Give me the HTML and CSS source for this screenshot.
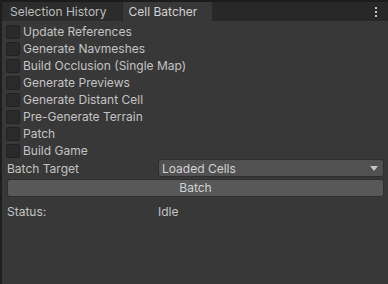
FILE: index.html
```html
<!DOCTYPE html>
<html lang="en">
<head>
    <meta charset="UTF-8">
    <title>Cell Batcher</title>
    <link rel="stylesheet" href="styles.css">
</head>
<body>
    <div class="window">
        <div class="tab-bar">
            <div class="tab">Selection History</div>
            <div class="tab active">Cell Batcher</div>
            <div class="menu-dots"><span></span><span></span><span></span></div>
        </div>

        <div class="panel">
            <label class="toggle"><span class="box"></span>Update References</label>
            <label class="toggle"><span class="box"></span>Generate Navmeshes</label>
            <label class="toggle"><span class="box"></span>Build Occlusion (Single Map)</label>
            <label class="toggle"><span class="box"></span>Generate Previews</label>
            <label class="toggle"><span class="box"></span>Generate Distant Cell</label>
            <label class="toggle"><span class="box"></span>Pre-Generate Terrain</label>
            <label class="toggle"><span class="box"></span>Patch</label>
            <label class="toggle"><span class="box"></span>Build Game</label>

            <div class="field">
                <span class="field-label">Batch Target</span>
                <div class="dropdown">
                    <span>Loaded Cells</span>
                    <span class="arrow"></span>
                </div>
            </div>

            <div class="button">Batch</div>

            <div class="field status">
                <span class="field-label">Status:</span>
                <span>Idle</span>
            </div>
        </div>
    </div>
</body>
</html>
```

FILE: styles.css
```css
body {
    margin: 0;
    background: #383838;
    font-family: Inter, "Noto Sans", sans-serif;
    font-size: 12px;
    color: #c4c4c4;
}

.window {
    width: 388px;
    height: 284px;
    border-left: 2px solid #1e1e1e;
    box-sizing: border-box;
    display: flex;
    flex-direction: column;
}

.tab-bar {
    display: flex;
    align-items: flex-end;
    height: 21px;
    background: #282828;
    border-top: 2px solid #1c1c1c;
    box-sizing: border-box;
    padding-left: 1px;
}

.tab {
    height: 19px;
    line-height: 19px;
    padding: 0 15px 0 7px;
    background: #2c2c2c;
    color: #bdbdbd;
    margin-right: 1px;
}

.tab.active {
    padding-left: 6px;
    background: #383838;
    color: #d2d2d2;
}

.menu-dots {
    margin-left: auto;
    margin-right: 11px;
    align-self: center;
    display: flex;
    flex-direction: column;
    gap: 2px;
}

.menu-dots span {
    width: 2px;
    height: 2px;
    background: #c4c4c4;
}

.panel {
    flex: 1;
    padding: 2px 4px 0 4px;
    display: flex;
    flex-direction: column;
}

.toggle {
    display: flex;
    align-items: center;
    height: 17px;
}

.box {
    width: 12px;
    height: 12px;
    background: #2a2a2a;
    border: 1px solid #222;
    border-radius: 2px;
    margin-right: 3px;
}

.field {
    display: flex;
    align-items: center;
    height: 18px;
    padding-left: 1px;
}

.field-label {
    width: 151px;
    flex-shrink: 0;
}

.dropdown {
    flex: 1;
    height: 16px;
    display: flex;
    align-items: center;
    justify-content: space-between;
    background: #515151;
    border: 1px solid #2f2f2f;
    border-radius: 3px;
    padding: 0 5px 0 3px;
    color: #d2d2d2;
}

.arrow {
    width: 0;
    height: 0;
    border-left: 4px solid transparent;
    border-right: 4px solid transparent;
    border-top: 5px solid #c4c4c4;
}

.button {
    height: 16px;
    line-height: 16px;
    margin: 2px 0 0 1px;
    text-align: center;
    background: #585858;
    border: 1px solid #2f2f2f;
    border-radius: 3px;
    color: #d2d2d2;
}

.status {
    margin-top: 5px;
}
```
